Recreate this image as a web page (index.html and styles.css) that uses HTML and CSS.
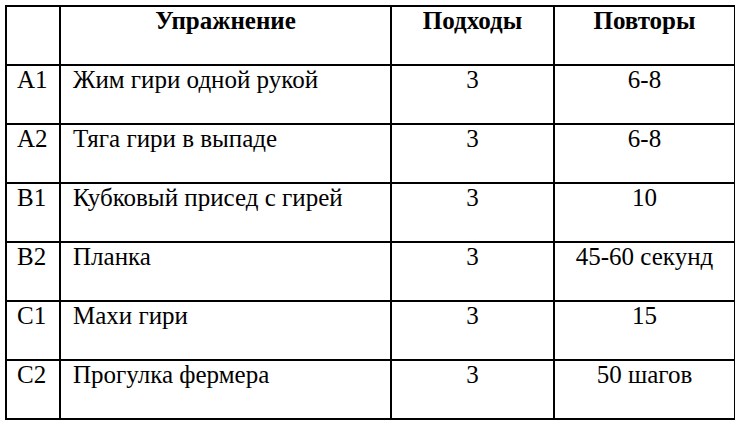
FILE: index.html
```html
<!DOCTYPE html>
<html lang="ru">
<head>
<meta charset="utf-8">
<title>Тренировка</title>
<link rel="stylesheet" href="styles.css">
</head>
<body>
<table class="plan">
  <thead>
    <tr>
      <th class="c-id"></th>
      <th class="c-name">Упражнение</th>
      <th class="c-sets">Подходы</th>
      <th class="c-reps">Повторы</th>
    </tr>
  </thead>
  <tbody>
    <tr><td class="c-id">A1</td><td class="c-name">Жим гири одной рукой</td><td class="c-sets">3</td><td class="c-reps">6-8</td></tr>
    <tr><td class="c-id">A2</td><td class="c-name">Тяга гири в выпаде</td><td class="c-sets">3</td><td class="c-reps">6-8</td></tr>
    <tr><td class="c-id">B1</td><td class="c-name">Кубковый присед с гирей</td><td class="c-sets">3</td><td class="c-reps">10</td></tr>
    <tr><td class="c-id">B2</td><td class="c-name">Планка</td><td class="c-sets">3</td><td class="c-reps">45-60 секунд</td></tr>
    <tr><td class="c-id">C1</td><td class="c-name">Махи гири</td><td class="c-sets">3</td><td class="c-reps">15</td></tr>
    <tr><td class="c-id">C2</td><td class="c-name">Прогулка фермера</td><td class="c-sets">3</td><td class="c-reps">50 шагов</td></tr>
  </tbody>
</table>
</body>
</html>
```

FILE: styles.css
```css
html, body {
  margin: 0;
  padding: 0;
  background: #ffffff;
}

body {
  padding: 5px 0 0 5px;
  font-family: "Liberation Serif", serif;
  color: #000000;
}

.plan {
  border-collapse: separate;
  border-spacing: 0;
  border-top: 2px solid #000;
  border-left: 2px solid #000;
  table-layout: fixed;
  width: 729px;
}

.plan th,
.plan td {
  font-family: "Liberation Serif", serif;
  color: #000;
  border-right: 2px solid #000;
  border-bottom: 2px solid #000;
  height: 59px;
  box-sizing: border-box;
  padding: 0;
  vertical-align: top;
  font-size: 25px;
  line-height: 28px;
  white-space: nowrap;
}

.plan th {
  font-weight: bold;
  text-align: center;
}

.plan td {
  font-weight: normal;
}

.c-id {
  width: 54px;
  text-align: left;
}

td.c-id {
  padding-left: 10px;
}

.c-name {
  width: 331px;
}

td.c-name {
  text-align: left;
  padding-left: 12px;
}

.c-sets {
  width: 163px;
  text-align: center;
}

.c-reps {
  width: 181px;
  text-align: center;
}
```
